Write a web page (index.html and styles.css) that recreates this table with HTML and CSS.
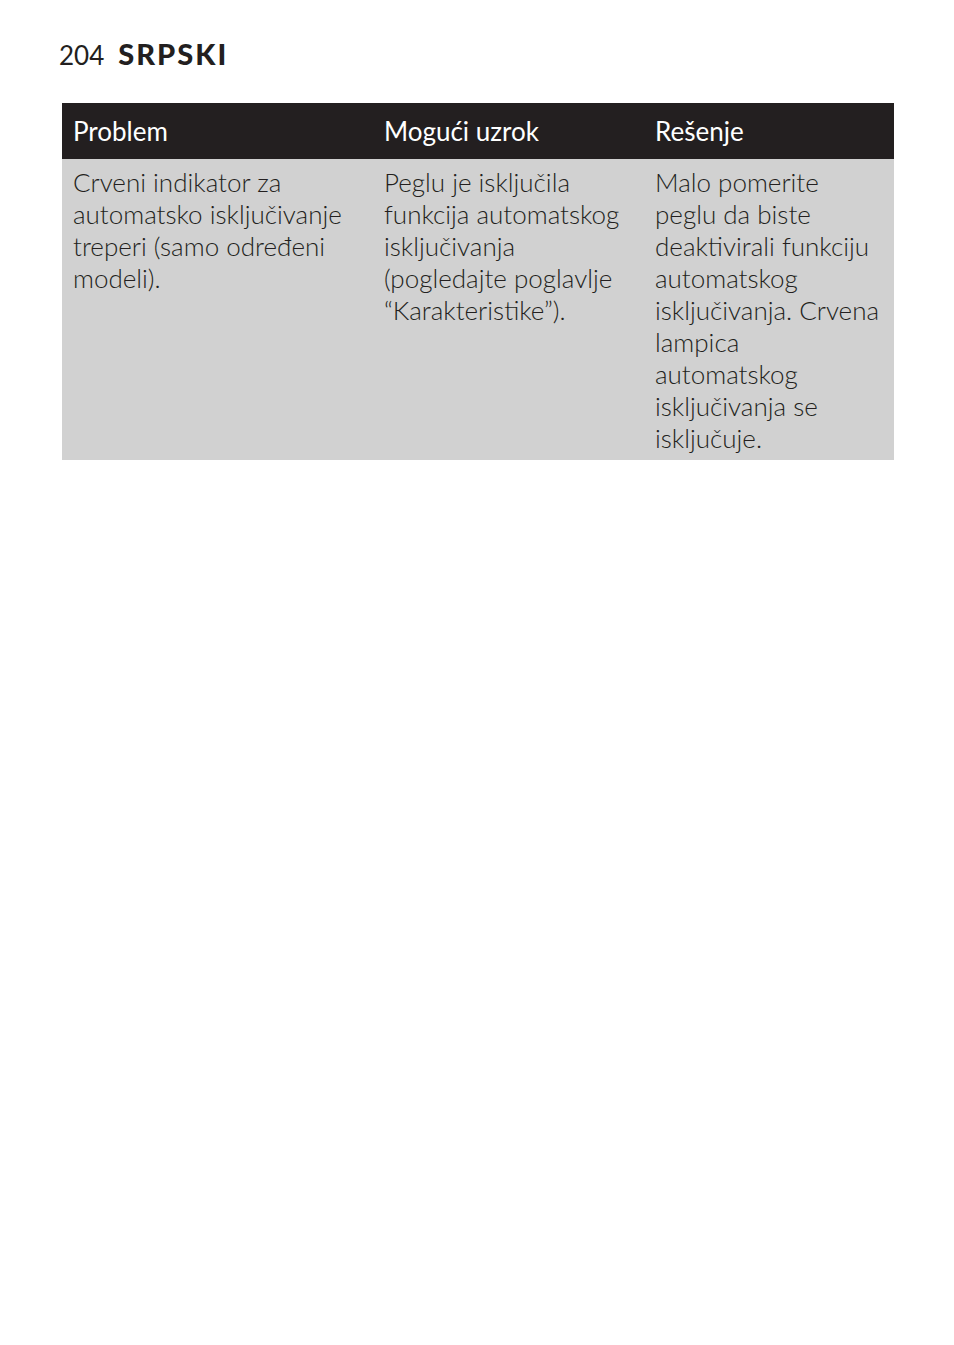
FILE: index.html
```html
<!DOCTYPE html>
<html lang="sr">
<head>
<meta charset="utf-8">
<title>204 SRPSKI</title>
<link rel="stylesheet" href="styles.css">
</head>
<body>
<div class="page">
  <header class="running-head">
    <span class="page-no">204</span>
    <span class="lang">SRPSKI</span>
  </header>
  <table class="trouble">
    <colgroup>
      <col class="c1"><col class="c2"><col class="c3">
    </colgroup>
    <thead>
      <tr><th>Problem</th><th>Mogući uzrok</th><th>Rešenje</th></tr>
    </thead>
    <tbody>
      <tr>
        <td>Crveni indikator za automatsko isključivanje treperi (samo određeni modeli).</td>
        <td>Peglu je isključila funkcija automatskog isključivanja (pogledajte poglavlje “Karakteristike”).</td>
        <td>Malo pomerite peglu da biste deaktivirali funkciju automatskog isključivanja. Crvena lampica automatskog isključivanja se isključuje.</td>
      </tr>
    </tbody>
  </table>
</div>
</body>
</html>
```

FILE: styles.css
```css
html, body {
  margin: 0;
  padding: 0;
  background: #ffffff;
}
.page {
  width: 954px;
  height: 1345px;
  box-sizing: border-box;
  padding: 36px 60px 0 62px;
  font-family: Lato, "Liberation Sans", sans-serif;
  color: #231f20;
}
.running-head {
  display: flex;
  align-items: baseline;
  gap: 14px;
  margin-left: -3px;
  height: 67px;
}
.page-no {
  font-size: 26px;
  font-weight: 400;
}
.lang {
  font-size: 29px;
  font-weight: 900;
  letter-spacing: 2px;
}
.trouble {
  width: 832px;
  border-collapse: collapse;
  table-layout: fixed;
}
.c1 { width: 311px; }
.c2 { width: 271px; }
.c3 { width: 250px; }
.trouble th {
  background: #231f20;
  color: #ffffff;
  text-align: left;
  font-weight: 400;
  font-size: 26px;
  height: 56px;
  padding: 0 11px;
  vertical-align: middle;
}
.trouble td {
  background: #d1d1d1;
  vertical-align: top;
  font-weight: 300;
  font-size: 26px;
  line-height: 32px;
  padding: 7px 11px 6px 11px;
}
```
